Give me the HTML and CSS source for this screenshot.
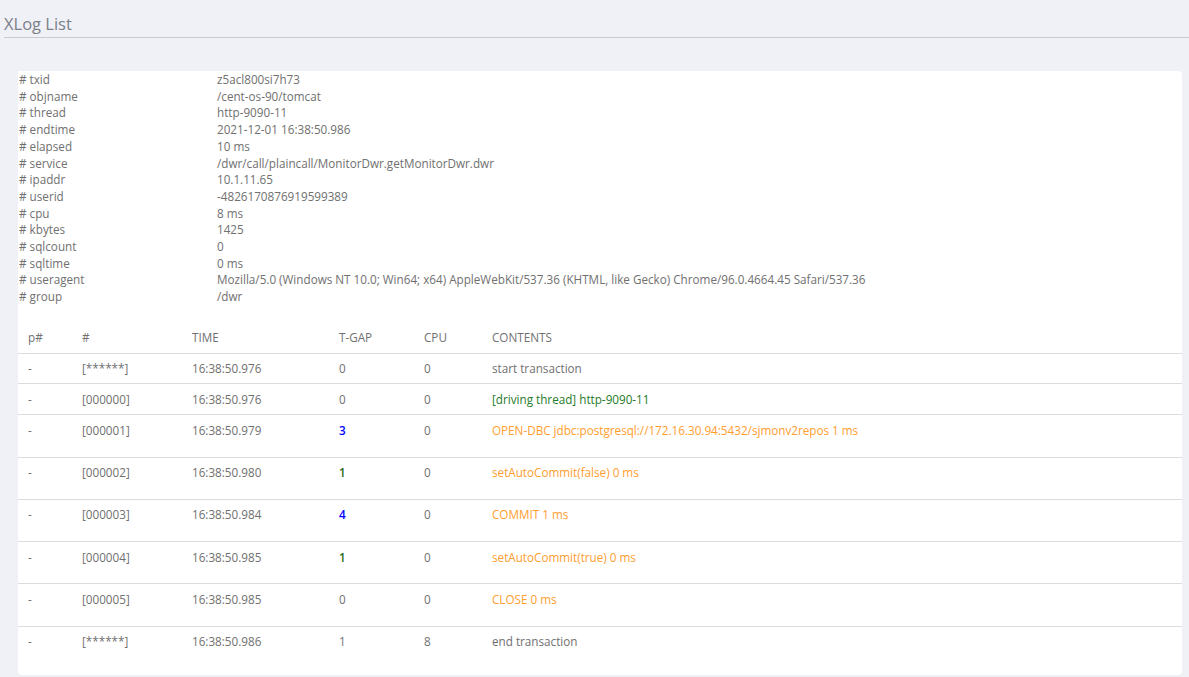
FILE: index.html
```html
<!DOCTYPE html>
<html>
<head>
<meta charset="utf-8">
<title>XLog List</title>
<link rel="stylesheet" href="styles.css">
</head>
<body>
<div class="page-head">
  <h1 class="page-title">XLog List</h1>
</div>
<div class="card">
  <div class="info">
    <div class="info-row"><span class="info-key"># txid</span><span class="info-val">z5acl800si7h73</span></div>
    <div class="info-row"><span class="info-key"># objname</span><span class="info-val">/cent-os-90/tomcat</span></div>
    <div class="info-row"><span class="info-key"># thread</span><span class="info-val">http-9090-11</span></div>
    <div class="info-row"><span class="info-key"># endtime</span><span class="info-val">2021-12-01 16:38:50.986</span></div>
    <div class="info-row"><span class="info-key"># elapsed</span><span class="info-val">10 ms</span></div>
    <div class="info-row"><span class="info-key"># service</span><span class="info-val">/dwr/call/plaincall/MonitorDwr.getMonitorDwr.dwr</span></div>
    <div class="info-row"><span class="info-key"># ipaddr</span><span class="info-val">10.1.11.65</span></div>
    <div class="info-row"><span class="info-key"># userid</span><span class="info-val">-4826170876919599389</span></div>
    <div class="info-row"><span class="info-key"># cpu</span><span class="info-val">8 ms</span></div>
    <div class="info-row"><span class="info-key"># kbytes</span><span class="info-val">1425</span></div>
    <div class="info-row"><span class="info-key"># sqlcount</span><span class="info-val">0</span></div>
    <div class="info-row"><span class="info-key"># sqltime</span><span class="info-val">0 ms</span></div>
    <div class="info-row"><span class="info-key"># useragent</span><span class="info-val">Mozilla/5.0 (Windows NT 10.0; Win64; x64) AppleWebKit/537.36 (KHTML, like Gecko) Chrome/96.0.4664.45 Safari/537.36</span></div>
    <div class="info-row"><span class="info-key"># group</span><span class="info-val">/dwr</span></div>
  </div>
  <table class="steps">
    <colgroup>
      <col class="c-p"><col class="c-n"><col class="c-time"><col class="c-gap"><col class="c-cpu"><col class="c-content">
    </colgroup>
    <thead>
      <tr><th>p#</th><th>#</th><th>TIME</th><th>T-GAP</th><th>CPU</th><th>CONTENTS</th></tr>
    </thead>
    <tbody>
      <tr><td>-</td><td>[******]</td><td>16:38:50.976</td><td>0</td><td>0</td><td>start transaction</td></tr>
      <tr><td>-</td><td>[000000]</td><td>16:38:50.976</td><td>0</td><td>0</td><td class="green">[driving thread] http-9090-11</td></tr>
      <tr class="tall"><td>-</td><td>[000001]</td><td>16:38:50.979</td><td class="gap-blue">3</td><td>0</td><td class="orange">OPEN-DBC jdbc:postgresql://172.16.30.94:5432/sjmonv2repos 1 ms</td></tr>
      <tr class="tall"><td>-</td><td>[000002]</td><td>16:38:50.980</td><td class="gap-green">1</td><td>0</td><td class="orange">setAutoCommit(false) 0 ms</td></tr>
      <tr class="tall"><td>-</td><td>[000003]</td><td>16:38:50.984</td><td class="gap-blue">4</td><td>0</td><td class="orange">COMMIT 1 ms</td></tr>
      <tr class="tall"><td>-</td><td>[000004]</td><td>16:38:50.985</td><td class="gap-green">1</td><td>0</td><td class="orange">setAutoCommit(true) 0 ms</td></tr>
      <tr class="tall"><td>-</td><td>[000005]</td><td>16:38:50.985</td><td>0</td><td>0</td><td class="orange">CLOSE 0 ms</td></tr>
      <tr class="tall"><td>-</td><td>[******]</td><td>16:38:50.986</td><td>1</td><td>8</td><td>end transaction</td></tr>
    </tbody>
  </table>
</div>
</body>
</html>
```
FILE: styles.css
```css
html, body {
  margin: 0;
  padding: 0;
  background: #f0f1f7;
  font-family: "Open Sans", "Noto Sans", sans-serif;
  color: #707070;
  font-size: 11.7px;
}

.page-head {
  margin-left: 4px;
  height: 38px;
  border-bottom: 1px solid #c9cbd3;
  box-sizing: border-box;
  padding-top: 12px;
}

.page-title {
  margin: 0;
  font-size: 16.5px;
  font-weight: 400;
  line-height: 24px;
  color: #7b808a;
}

.card {
  margin: 33px 7px 0 18px;
  background: #ffffff;
  border-radius: 0 4px 4px 4px;
  padding: 0 0 5px 0;
  height: 604px;
  box-sizing: border-box;
}

.info {
  padding-left: 1px;
  line-height: 16.7px;
}

.info-row {
  display: flex;
}

.info-key {
  width: 198px;
  flex: none;
}

.info-val {
  flex: 1;
}

.steps {
  width: 100%;
  border-collapse: collapse;
  margin-top: 18px;
  table-layout: fixed;
}

.c-p { width: 54px; }
.c-n { width: 110px; }
.c-time { width: 147px; }
.c-gap { width: 85px; }
.c-cpu { width: 68px; }

.steps th {
  font-weight: 400;
  text-align: left;
  padding: 6.5px 10px;
  line-height: 16.8px;
  color: #707070;
}

.steps td {
  padding: 6.5px 10px;
  line-height: 16.8px;
  border-top: 1px solid #dcdcdc;
  vertical-align: top;
  white-space: nowrap;
}

.steps tr.tall td {
  padding-bottom: 18px;
}

.green { color: #1f7a2a; }
.orange { color: #ff9d2e; }
.gap-blue { color: #0000ff; font-weight: 600; }
.gap-green { color: #2a6b16; font-weight: 600; }
```
